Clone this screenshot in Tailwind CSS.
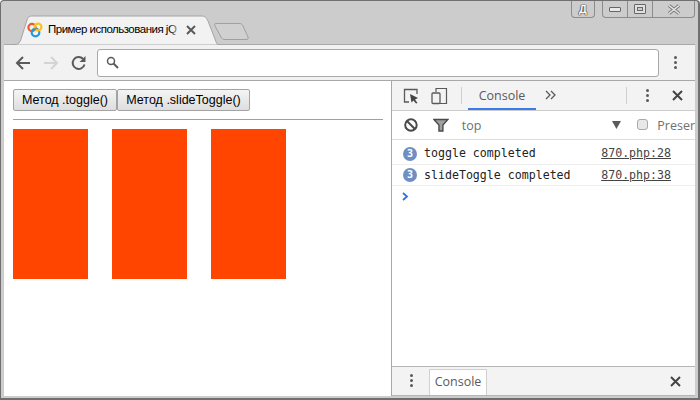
<!DOCTYPE html>
<html lang="ru">
<head>
  <meta charset="UTF-8">
  <title>Пример использования jQuery</title>
  <script src="https://cdn.jsdelivr.net/npm/@tailwindcss/browser@4"></script>
</head>
<body class="w-[700px] h-[400px] overflow-hidden bg-white font-['Liberation_Sans',sans-serif]">
  <div class="w-[700px] h-[400px] flex flex-col bg-[#cccccc] border border-[#6f6f6f] border-r-2 border-b-2 rounded-t-[4px] px-[3px] pb-[2px]">
    <!-- title bar -->
    <div class="relative h-[43px] shrink-0 -mx-[3px]">
      <div class="absolute left-[10px] top-[14px] w-[207px] h-[30px] z-10">
        <svg width="207" height="30" class="absolute inset-0">
          <path d="M0 29.5 H3 C8 29.5 9 27 10 24 L16 5 C17 2 18 1 22 1 H190 C194 1 195 2 197 6 L204 24 C205 27 206 29.5 207 29.5" fill="#f2f2f2" stroke="#a4a4a4"/>
        </svg>
        <div class="relative flex items-center h-[30px] pl-[16px]">
          <svg width="16" height="16" viewBox="0 0 16 16" class="shrink-0">
            <circle cx="8.5" cy="10.5" r="3.8" fill="none" stroke="#1e9be0" stroke-width="2.2"/>
            <circle cx="5" cy="5.5" r="3.6" fill="none" stroke="#ec5a2a" stroke-width="2.2"/>
            <circle cx="11" cy="5" r="3.4" fill="none" stroke="#f8c41c" stroke-width="2.2"/>
            <path d="M5 9 L9 6.5" stroke="#1e9be0" stroke-width="2"/>
          </svg>
          <div class="relative ml-[5px] w-[135px] overflow-hidden">
            <span class="block whitespace-nowrap text-[11.5px] tracking-[-0.5px] text-black leading-none">Пример использования jQ</span>
            <div class="absolute right-0 top-0 bottom-0 w-[14px] bg-gradient-to-r from-[#f2f2f2]/0 to-[#f2f2f2]"></div>
          </div>
          <svg width="10" height="10" viewBox="0 0 10 10" class="ml-[3px]"><path d="M1 1 L9 9 M9 1 L1 9" stroke="#5a5a5a" stroke-width="2"/></svg>
        </div>
      </div>
      <svg width="36" height="20" class="absolute left-[213px] top-[21px]">
        <path d="M1.5 1.5 H25 C27 1.5 28 2 29 4 L34 15 C34.5 17 34 17.5 32 17.5 H11 C9 17.5 8 17 7 15 L1 4 C0.5 2 0.5 1.5 1.5 1.5 Z" fill="#d0d0d0" stroke="#a0a0a0"/>
      </svg>
      <!-- window buttons -->
      <div class="absolute right-[3px] top-0 flex gap-[7px]">
        <div class="w-[24px] h-[17px] border border-t-0 border-[#8c8c8c] rounded-b-[4px] flex items-center justify-center">
          <span class="text-[11px] font-bold text-white leading-none [text-shadow:0_0_1px_#222,0_0_1px_#222,0_0_1px_#222]">Д</span>
        </div>
        <div class="h-[17px] flex border border-t-0 border-[#8c8c8c] rounded-b-[4px]">
          <div class="w-[25px] flex items-center justify-center border-r border-[#8c8c8c]"><div class="w-[12px] h-[5px] bg-[#e8e8e8] border border-[#666] rounded-[1px]"></div></div>
          <div class="w-[25px] flex items-center justify-center border-r border-[#8c8c8c]">
            <div class="w-[12px] h-[10px] border border-[#666] rounded-[1px] bg-[#e0e0e0] flex items-center justify-center"><div class="w-[6px] h-[4px] border border-[#666] bg-[#cccccc]"></div></div>
          </div>
          <div class="w-[41px] flex items-center justify-center">
            <svg width="14" height="11" viewBox="0 0 14 11"><path d="M2 1.5 L12 9.5 M12 1.5 L2 9.5" stroke="#777" stroke-width="3.4"/><path d="M2 1.5 L12 9.5 M12 1.5 L2 9.5" stroke="#e6e6e6" stroke-width="1.6"/></svg>
          </div>
        </div>
      </div>
    </div>
    <!-- toolbar -->
    <div class="h-[37px] shrink-0 flex items-center bg-[#f2f2f2] border-t border-b border-[#a8a8a8] pl-[11px] pr-[14px]">
      <svg width="16" height="16" viewBox="0 0 16 16"><path d="M15 8 H2 M8 2 L2 8 L8 14" fill="none" stroke="#5a5a5a" stroke-width="2"/></svg>
      <svg width="16" height="16" viewBox="0 0 16 16" class="ml-[12px]"><path d="M1 8 H14 M8 2 L14 8 L8 14" fill="none" stroke="#d4d4d4" stroke-width="2"/></svg>
      <svg width="16" height="16" viewBox="0 0 16 16" class="ml-[12px]"><path d="M13.5 9.5 A6 6 0 1 1 12 3.8" fill="none" stroke="#5a5a5a" stroke-width="2"/><path d="M14.5 1 V7 H8.5 Z" fill="#5a5a5a"/></svg>
      <div class="ml-[10px] w-[562px] h-[28px] flex items-center bg-white border border-[#a9a9a9] rounded-[3px] pl-[8px]">
        <svg width="13" height="13" viewBox="0 0 13 13"><circle cx="5" cy="5" r="3.5" fill="none" stroke="#5a5a5a" stroke-width="1.5"/><path d="M7.5 7.5 L12 12" stroke="#5a5a5a" stroke-width="2"/></svg>
      </div>
      <div class="ml-[15px] flex flex-col gap-[2px]">
        <div class="w-[3px] h-[3px] rounded-full bg-[#5a5a5a]"></div>
        <div class="w-[3px] h-[3px] rounded-full bg-[#5a5a5a]"></div>
        <div class="w-[3px] h-[3px] rounded-full bg-[#5a5a5a]"></div>
      </div>
    </div>
    <!-- content -->
    <div class="flex-1 min-h-0 flex bg-white">
      <!-- page -->
      <div class="w-[388px] shrink-0 pt-[8px] pl-[9px] pr-[8px] border-r border-[#a8a8a8]">
        <div class="flex">
          <button class="h-[22px] w-[104px] border border-[#a3a3a3] rounded-[2px] bg-gradient-to-b from-[#f4f4f4] to-[#dedede] text-[12.5px] text-black leading-none">Метод .toggle()</button>
          <button class="h-[22px] w-[133px] border border-[#a3a3a3] rounded-[2px] bg-gradient-to-b from-[#f4f4f4] to-[#dedede] text-[12.5px] text-black leading-none">Метод .slideToggle()</button>
        </div>
        <div class="mt-[8px] h-px bg-[#a0a0a0]"></div>
        <div class="mt-[9px] flex gap-[24px]">
          <div class="w-[75px] h-[150px] bg-[#ff4500]"></div>
          <div class="w-[75px] h-[150px] bg-[#ff4500]"></div>
          <div class="w-[75px] h-[150px] bg-[#ff4500]"></div>
        </div>
      </div>
      <!-- devtools -->
      <div class="flex-1 min-w-0 flex flex-col overflow-hidden font-['Open_Sans',sans-serif]">
        <div class="h-[30px] shrink-0 flex items-center bg-[#f3f3f3] border-b border-[#cccccc] pl-[11px]">
          <svg width="16" height="16" viewBox="0 0 16 16"><path d="M6 14 H1.5 V1.5 H14 V6" fill="none" stroke="#5a5a5a" stroke-width="1.3"/><path d="M7 6 L15 10 L12 11.5 L14.5 15 L13 15.5 L10.5 12.5 L8.5 14.5 Z" fill="#444"/></svg>
          <svg width="17" height="18" viewBox="0 0 17 18" class="ml-[12px]"><path d="M5 5 V1.5 H15.5 V16.5 H9" fill="none" stroke="#5a5a5a" stroke-width="1.2"/><rect x="1" y="6" width="8" height="10.5" rx="1" fill="none" stroke="#5a5a5a" stroke-width="1.3"/></svg>
          <div class="ml-[13px] w-px h-[17px] bg-[#cfcfcf]"></div>
          <div class="relative ml-[6px] w-[68px] h-[29px] flex items-center justify-center pt-[1px] text-[12.5px] text-[#5a5a5a]">
            Console
            <div class="absolute left-0 right-0 bottom-0 h-[2px] bg-[#3b7de8]"></div>
          </div>
          <svg width="11" height="10" viewBox="0 0 11 10" class="ml-[9px] -mt-[2px]"><path d="M1 1 L5 5 L1 9 M6 1 L10 5 L6 9" fill="none" stroke="#5a5a5a" stroke-width="1.3"/></svg>
          <div class="ml-[70px] w-px h-[17px] bg-[#cfcfcf]"></div>
          <div class="ml-[19px] flex flex-col gap-[2px]">
            <div class="w-[3px] h-[3px] rounded-full bg-[#5a5a5a]"></div>
            <div class="w-[3px] h-[3px] rounded-full bg-[#5a5a5a]"></div>
            <div class="w-[3px] h-[3px] rounded-full bg-[#5a5a5a]"></div>
          </div>
          <svg width="11" height="11" viewBox="0 0 11 11" class="ml-[23px]"><path d="M1 1 L10 10 M10 1 L1 10" stroke="#444" stroke-width="2"/></svg>
        </div>
        <div class="h-[29px] shrink-0 flex items-center bg-white border-b border-[#dddddd] pl-[12px] whitespace-nowrap">
          <svg width="14" height="14" viewBox="0 0 14 14"><circle cx="7" cy="7" r="5.8" fill="none" stroke="#4a4a4a" stroke-width="2"/><path d="M3 3 L11 11" stroke="#4a4a4a" stroke-width="2"/></svg>
          <svg width="16" height="14" viewBox="0 0 16 14" class="ml-[15px]"><path d="M1 1.5 H15 L10 7 V13 H6 V7 Z" fill="#a0a0a0" stroke="#4a4a4a" stroke-width="1.4"/></svg>
          <span class="ml-[13px] text-[12.5px] text-[#6f6f6f] w-[140px] pt-[2px]">top</span>
          <svg width="9" height="8" viewBox="0 0 9 8" class="ml-[12px]"><path d="M0 0 H9 L4.5 8 Z" fill="#5a5a5a"/></svg>
          <div class="ml-[16px] -mt-[2px] w-[11px] h-[11px] border border-[#a9a9a9] rounded-[3px] bg-[#e8e8e8]"></div>
          <span class="ml-[9px] text-[12.5px] text-[#6f6f6f] pt-[2px]">Preser</span>
        </div>
        <div class="h-[22px] mt-[3px] shrink-0 flex items-center border-b border-[#eeeeee] pl-[11px] pr-[24px] font-['DejaVu_Sans_Mono',monospace] text-[11.6px] text-[#222]">
          <span class="w-[14px] h-[14px] rounded-full bg-[#6f8fc4] text-white text-[10px] leading-[14px] text-center font-bold">3</span>
          <span class="ml-[7px] mt-[1px] flex-1">toggle completed</span>
          <span class="mt-[1px] underline text-[#444]">870.php:28</span>
        </div>
        <div class="h-[21px] shrink-0 flex items-center border-b border-[#eeeeee] pl-[11px] pr-[24px] font-['DejaVu_Sans_Mono',monospace] text-[11.6px] text-[#222]">
          <span class="w-[14px] h-[14px] rounded-full bg-[#6f8fc4] text-white text-[10px] leading-[14px] text-center font-bold">3</span>
          <span class="ml-[7px] mt-[1px] flex-1">slideToggle completed</span>
          <span class="mt-[1px] underline text-[#444]">870.php:38</span>
        </div>
        <div class="h-[20px] shrink-0 flex items-center pl-[10px]">
          <svg width="7" height="9" viewBox="0 0 7 9"><path d="M1 1 L5 4.5 L1 8" fill="none" stroke="#2a72e8" stroke-width="1.8"/></svg>
        </div>
        <div class="flex-1"></div>
        <div class="h-[30px] shrink-0 flex items-end bg-[#f3f3f3] border-t border-b border-[#b5b5b5]">
          <div class="ml-[18px] mb-[8px] flex flex-col gap-[2px]">
            <div class="w-[3px] h-[3px] rounded-full bg-[#5a5a5a]"></div>
            <div class="w-[3px] h-[3px] rounded-full bg-[#5a5a5a]"></div>
            <div class="w-[3px] h-[3px] rounded-full bg-[#5a5a5a]"></div>
          </div>
          <div class="ml-[16px] w-[58px] h-[26px] bg-white border border-b-0 border-[#d0d0d0] flex items-center justify-center text-[12.5px] text-[#5a5a5a]">Console</div>
          <svg width="11" height="11" viewBox="0 0 11 11" class="ml-auto mr-[14px] mb-[8px]"><path d="M1 1 L10 10 M10 1 L1 10" stroke="#444" stroke-width="2"/></svg>
        </div>
      </div>
    </div>
  </div>
</body>
</html>
